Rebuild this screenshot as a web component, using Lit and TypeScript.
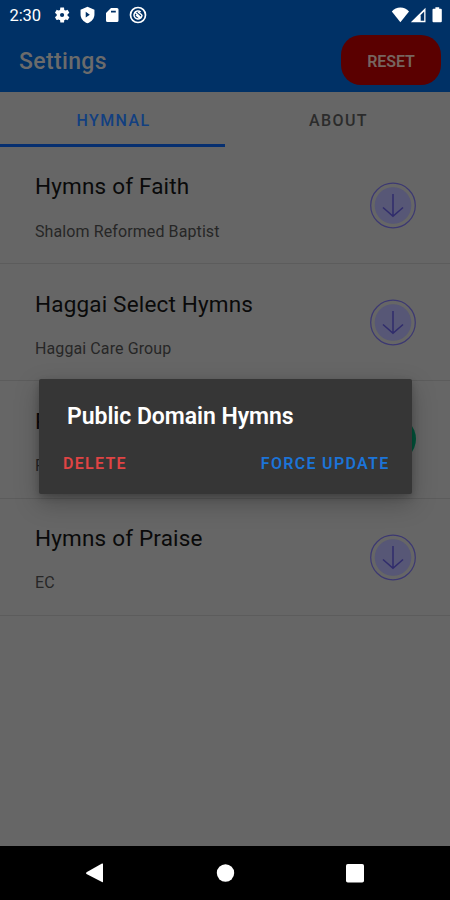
import { LitElement, html, css } from "lit";
import { customElement, property } from "lit/decorators.js";

interface Hymnal {
  title: string;
  owner: string;
  installed?: boolean;
}

const HYMNALS: Hymnal[] = [
  { title: "Hymns of Faith", owner: "Shalom Reformed Baptist" },
  { title: "Haggai Select Hymns", owner: "Haggai Care Group" },
  { title: "Public Domain Hymns", owner: "Public Domain", installed: true },
  { title: "Hymns of Praise", owner: "EC" },
];

@customElement("status-bar")
class StatusBar extends LitElement {
  static styles = css`
    :host { display: flex; align-items: center; height: 30px; padding: 0 7px 0 9.5px; color: #fff; }
    .time { font-size: 16.5px; line-height: 28px; padding-top: 2px; width: 43.5px; letter-spacing: -0.1px; }
    .left { display: flex; gap: 7.5px; align-items: center; flex: 1; }
    .right { display: flex; align-items: center; margin-top: -2px; }
    svg { display: block; }
  `;
  render() {
    return html`
      <span class="time">2:30</span>
      <div class="left">
        <svg width="18" height="18" viewBox="0 0 24 24"><path fill="#fff" fill-rule="evenodd" d="M19.4 13c.04-.3.06-.6.06-1s-.02-.7-.07-1l2.1-1.6c.2-.15.24-.4.12-.6l-2-3.4c-.1-.2-.35-.3-.57-.2l-2.4.95c-.5-.38-1-.7-1.6-.94L14.7 2.4c-.04-.23-.24-.4-.5-.4h-4c-.24 0-.43.17-.47.4l-.36 2.8c-.6.25-1.1.57-1.6.95l-2.4-.96c-.2-.08-.46 0-.58.2l-2 3.4c-.1.2-.06.46.13.6L5 11c-.05.3-.1.67-.1 1s.03.7.07 1l-2.05 1.6c-.2.14-.24.4-.12.6l2 3.4c.1.2.35.28.57.2l2.4-.96c.5.38 1 .7 1.62.94l.36 2.8c.05.24.25.42.5.42h4c.24 0 .44-.17.47-.4l.37-2.8c.58-.25 1.1-.57 1.6-.95l2.4.96c.2.08.46 0 .58-.2l2-3.4c.1-.2.06-.46-.13-.6zM12.1 14.8a2.8 2.8 0 1 1 0-5.6 2.8 2.8 0 0 1 0 5.6z"/></svg>
        <svg width="17" height="18" viewBox="0 0 24 25"><path fill="#fff" fill-rule="evenodd" d="M12 .8 2.2 5v6.700c0 5.500 4 10.500 9.800 12.300 5.800-1.800 9.800-6.800 9.800-12.300V5zM9.500 8l5.800 4-5.800 4z"/></svg>
        <svg width="18" height="18" viewBox="0 0 18 18"><path fill="#fff" fill-rule="evenodd" d="M8 2h6a1.500 1.500 0 0 1 1.500 1.500v11A1.500 1.500 0 0 1 14 16H4.500A1.500 1.500 0 0 1 3 14.500V7zM8 4.800v1.700h4.800V4.800z"/></svg>
        <svg width="18" height="18" viewBox="0 0 18 18" fill="none" stroke="#fff"><circle cx="9" cy="9" r="7.500" stroke-width="1.700"/><path stroke-width="1.500" d="M13 9a4 4 0 1 1-1.300-3M5.500 5.800l7 6.400M7 9l3.500 3M9 6l4 3"/></svg>
      </div>
      <div class="right">
        <svg width="19" height="17" viewBox="0 0 19 17"><path fill="#fff" d="M.8 5.500C3 2.700 6 1.500 9.400 1.500S15.800 2.700 18 5.500L9.400 16.300z"/></svg>
        <svg width="17" height="17" viewBox="0 0 17 17"><path fill="#fff" fill-rule="evenodd" d="M15.500 1.700v14.600H.8zM14.200 5.500v9.300h-3.800V9.300z"/><path fill="#fff" d="M8.500 9.500h2v6h-2z"/></svg>
        <svg width="16" height="17" viewBox="0 0 16 17"><path fill="#fff" d="M8.400 1.200h3.800v1.500h1.600a1 1 0 0 1 1 1v11.600a1 1 0 0 1-1 1H6.500a1 1 0 0 1-1-1V3.700a1 1 0 0 1 1-1h1.900z"/></svg>
      </div>
    `;
  }
}

@customElement("hymnal-row")
class HymnalRow extends LitElement {
  @property({ attribute: false }) item!: Hymnal;
  static styles = css`
    :host {
      display: flex; align-items: center; justify-content: space-between; box-sizing: border-box;
      height: 117.2px; padding: 0 33px 0 35px; border-bottom: 1px solid #5c5c5c;
    }
    .text { display: flex; flex-direction: column; gap: 19.500px; padding-top: 6px; }
    .title { font-size: 22.5px; line-height: 28px; color: #0a0a0a; letter-spacing: 0.18px; white-space: nowrap; }
    .owner { font-size: 16px; line-height: 24px; color: #262626; letter-spacing: 0.1px; white-space: nowrap; }
    svg { display: block; }
  `;
  render() {
    const { title, owner, installed } = this.item;
    return html`
      <div class="text">
        <span class="title">${title}</span>
        <span class="owner">${owner}</span>
      </div>
      ${installed
        ? html`<svg width="48" height="48" viewBox="0 0 48 48"><circle cx="24" cy="24" r="23" fill="#00563c"/><path d="M14 24l7 7 13-14" fill="none" stroke="#666" stroke-width="2"/></svg>`
        : html`<svg width="48" height="48" viewBox="0 0 48 48" fill="none" stroke="#302c6c">
            <circle cx="24" cy="24.500" r="22.300" stroke="#3c3872" stroke-width="1.200"/>
            <circle cx="24" cy="24.500" r="18.300" fill="#575776" stroke="none"/>
            <path stroke-width="1.500" d="M24 13v22M14 26.500l10 8.800 10-8.800"/>
          </svg>`}
    `;
  }
}

@customElement("app-root")
class AppRoot extends LitElement {
  static styles = css`
    :host {
      display: flex; flex-direction: column; position: relative; height: 900px; width: 450px;
      overflow: hidden; background: #666; font-family: Roboto, sans-serif;
    }
    .header { background: #003166; height: 92px; box-sizing: border-box; }
    .bar { display: flex; align-items: center; justify-content: space-between; height: 60px; padding: 0 9px 0 19px; }
    .heading { font-size: 23px; font-weight: 500; color: #6b6b6b; letter-spacing: 0.35px; padding-top: 3px; }
    .reset {
      width: 100px; height: 50px; border-radius: 20px; background: #5a0000; color: #76655f;
      font-size: 16px; font-weight: 600; display: grid; place-items: center; letter-spacing: -0.1px;
      box-sizing: border-box; padding-top: 2px;
    }
    .tabs { display: grid; grid-template-columns: 1fr 1fr; height: 55px; }
    .tab {
      display: grid; place-items: center; box-sizing: border-box; border-bottom: 3px solid transparent;
      font-size: 16px; font-weight: 500; letter-spacing: 1.4px; color: #2b2b2b; padding: 4px 0 0 2px;
    }
    .tab.active { color: #123f80; border-color: #062f70; }
    .list { flex: 1; }
    .nav { height: 54px; background: #000; display: grid; place-items: center; }
    .nav svg { display: block; }
    .dialog {
      position: absolute; left: 39px; top: 379px; width: 373px; height: 115px; box-sizing: border-box;
      background: #363636; border-radius: 2px; padding: 22px 22px 0 24px;
      box-shadow: 0 9px 24px rgba(0, 0, 0, 0.25), 0 3px 7px rgba(0, 0, 0, 0.2);
    }
    .question { font-size: 23px; font-weight: 600; line-height: 32px; color: #fff; padding-left: 4px; white-space: nowrap; letter-spacing: -0.04px; }
    .actions { display: flex; justify-content: space-between; margin-top: 19px; font-size: 16px; line-height: 24px; font-weight: 600; letter-spacing: 1.3px; }
    .danger { color: #e04444; }
    .primary { color: #1c74d8; margin-right: 0.5px; }
  `;
  render() {
    return html`
      <header class="header">
        <status-bar></status-bar>
        <div class="bar">
          <span class="heading">Settings</span>
          <span class="reset">RESET</span>
        </div>
      </header>
      <nav class="tabs">
        <span class="tab active">HYMNAL</span>
        <span class="tab">ABOUT</span>
      </nav>
      <main class="list">${HYMNALS.map((h) => html`<hymnal-row .item=${h}></hymnal-row>`)}</main>
      <footer class="nav">
        <svg width="450" height="54" viewBox="0 0 450 54" fill="#fff">
          <path d="M86.500 26.200 102 17.500q1 -.4 1 .6v17.500q0 1-1 .5L86.500 28q-1-.9 0-1.800z"/>
          <circle cx="225.500" cy="27" r="8.700"/>
          <rect x="346" y="18" width="18" height="18.500" rx="1.800"/>
        </svg>
      </footer>
      <section class="dialog">
        <div class="question">Public Domain Hymns</div>
        <div class="actions"><span class="danger">DELETE</span><span class="primary">FORCE UPDATE</span></div>
      </section>
    `;
  }
}
